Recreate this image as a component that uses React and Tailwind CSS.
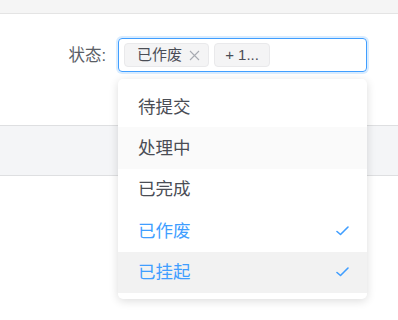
import { useState } from "react";

const options = [
  { label: "待提交", selected: false },
  { label: "处理中", selected: false, hover: true },
  { label: "已完成", selected: false },
  { label: "已作废", selected: true },
  { label: "已挂起", selected: true, active: true },
];

function Check() {
  return (
    <svg width="13" height="10" viewBox="0 0 13 10" fill="none">
      <path d="M1 5.5L4.5 8.5L12 1" stroke="#409eff" strokeWidth="1.6" strokeLinecap="round" strokeLinejoin="round" />
    </svg>
  );
}

function Close() {
  return (
    <svg width="11" height="11" viewBox="0 0 11 11" fill="none">
      <path d="M1 1L10 10M10 1L1 10" stroke="#a8abb2" strokeWidth="1.1" />
    </svg>
  );
}

export default function App() {
  const [open] = useState(true);

  return (
    <div
      className="relative w-[398px] h-[320px] bg-white overflow-hidden"
      style={{ fontFamily: '"Liberation Sans", "Noto Sans CJK SC", sans-serif' }}
    >
      {/* top strip */}
      <div className="h-[14px] bg-[#f5f5f5] border-b border-[#e4e4e4]" />

      {/* form row */}
      <div className="mt-[24px] flex items-center">
        <label className="w-[118px] pr-[12px] text-right text-[16.5px] text-[#5a5e66]">状态:</label>
        <div className="w-[249px] h-[34px] rounded-[4px] border border-[#409eff] shadow-[0_0_0_2px_rgba(64,158,255,0.2)] flex items-center gap-[5px] px-[5px]">
          <span className="h-[24px] flex items-center gap-[7px] pl-[12px] pr-[8px] bg-[#f4f4f5] border border-[#e9e9eb] rounded-[4px] text-[15px] text-[#4a4d55]">
            已作废
            <Close />
          </span>
          <span className="h-[24px] w-[56px] flex items-center justify-center bg-[#f4f4f5] border border-[#e9e9eb] rounded-[4px] text-[15px] text-[#4a4d55]">
            + 1...
          </span>
        </div>
      </div>

      {/* gray band behind */}
      <div className="mt-[53px] h-[51px] bg-[#f4f5f7] border-y border-[#dedfe1]" />

      {/* dropdown */}
      {open && (
        <div className="absolute left-[118px] top-[79px] w-[249px] bg-white rounded-[5px] shadow-[0_2px_10px_rgba(0,0,0,0.14)] pt-[7px] pb-[6px]">
          {options.map((o) => (
            <div
              key={o.label}
              className={
                "h-[41.4px] flex items-center justify-between pl-[20px] pr-[18px] text-[17.5px] " +
                (o.selected ? "text-[#409eff] " : "text-[#4a4d55] ") +
                (o.active ? "bg-[#f2f2f2]" : o.hover ? "bg-[#fafafa]" : "bg-white")
              }
            >
              <span>{o.label}</span>
              {o.selected && <Check />}
            </div>
          ))}
        </div>
      )}
    </div>
  );
}
